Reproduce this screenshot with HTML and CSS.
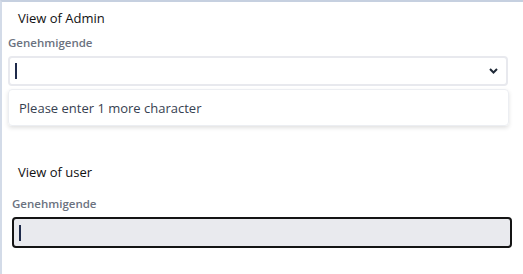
FILE: index.html
```html
<!DOCTYPE html>
<html>
<head>
<meta charset="utf-8">
<link rel="stylesheet" href="styles.css">
</head>
<body>
<div class="frame">
  <section class="admin">
    <h2 class="title">View of Admin</h2>
    <div class="label">Genehmigende</div>
    <div class="select">
      <span class="caret"></span>
      <svg class="chev" width="9" height="6" viewBox="0 0 9 6"><path d="M1 1 L4.5 4.5 L8 1" fill="none" stroke="#1f2937" stroke-width="2"/></svg>
    </div>
    <div class="dropdown">Please enter 1 more character</div>
  </section>
  <section class="user">
    <h2 class="title">View of user</h2>
    <div class="label">Genehmigende</div>
    <div class="input"><span class="caret"></span></div>
  </section>
</div>
</body>
</html>
```
FILE: styles.css
```css
html, body { margin: 0; padding: 0; background: #fff; }
body { width: 523px; height: 274px; overflow: hidden; font-family: "Open Sans", "Noto Sans", sans-serif; }
.frame {
  box-sizing: border-box;
  height: 274px;
  border-top: 2px solid #c6d0e0;
  border-left: 2px solid #d3dbe8;
  padding: 0 0 0 6px;
}
.title {
  margin: 0;
  font-weight: 400;
  font-size: 13px;
  line-height: 18px;
  color: #111;
  padding-left: 10px;
}
.admin { padding-top: 7px; width: 500px; }
.admin .label { margin-top: 8px; }
.label {
  font-size: 11.5px;
  font-weight: 600;
  color: #6b7280;
  line-height: 15px;
}
.select {
  margin-top: 6px;
  box-sizing: border-box;
  height: 30px;
  border: 2px solid #e8e9ee;
  border-radius: 4px;
  display: flex;
  align-items: center;
  justify-content: space-between;
  padding: 0 8px 0 5px;
}
.caret { display: block; width: 1.5px; height: 16px; background: #1e2a4a; }
.chev { display: block; }
.dropdown {
  margin-top: 3px;
  box-sizing: border-box;
  width: 501px;
  height: 37px;
  border-radius: 4px;
  border: 1px solid #eceef2;
  box-shadow: 0 2px 4px rgba(0,0,0,0.12);
  font-size: 13px;
  color: #374151;
  padding: 0 0 0 10px;
  display: flex;
  align-items: center;
}
.user { padding: 37px 0 0 4px; width: 500px; }
.user .title { padding-left: 6px; }
.user .label { margin-top: 15px; }
.input {
  margin-top: 6px;
  box-sizing: border-box;
  height: 31px;
  border: 2px solid #141414;
  border-radius: 4px;
  background: #e9eaee;
  display: flex;
  align-items: center;
  padding-left: 5px;
}
```
